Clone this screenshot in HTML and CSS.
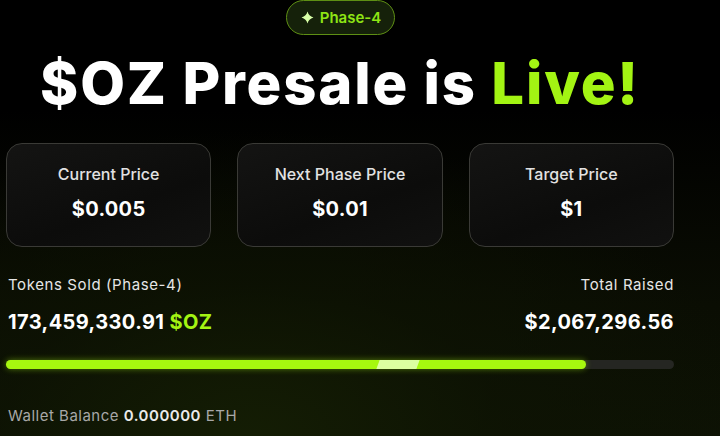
FILE: index.html
```html
<!DOCTYPE html>
<html>
<head>
<meta charset="utf-8">
<link rel="stylesheet" href="styles.css">
</head>
<body>
<main class="presale">
  <div class="badge-row">
    <span class="badge">
      <svg class="sparkle" viewBox="0 0 12 12" width="13" height="13"><path d="M6 0.5 C6.9 3.5 8.4 5 11.5 6 C8.4 7 6.9 8.5 6 11.5 C5.1 8.5 3.6 7 0.5 6 C3.6 5 5.1 3.5 6 0.5Z" fill="#d8ffa8"/></svg>
      Phase-4
    </span>
  </div>
  <h1 class="title">$OZ Presale is <span class="live">Live!</span></h1>
  <section class="cards">
    <div class="card"><div class="card-label">Current Price</div><div class="card-value">$0.005</div></div>
    <div class="card"><div class="card-label">Next Phase Price</div><div class="card-value">$0.01</div></div>
    <div class="card"><div class="card-label">Target Price</div><div class="card-value">$1</div></div>
  </section>
  <section class="stats">
    <div class="stat">
      <div class="stat-label">Tokens Sold (Phase-4)</div>
      <div class="stat-value">173,459,330.91 <span class="accent">$OZ</span></div>
    </div>
    <div class="stat stat-right">
      <div class="stat-label">Total Raised</div>
      <div class="stat-value">$2,067,296.56</div>
    </div>
  </section>
  <div class="track">
    <div class="fill" style="width:86.8%"><span class="shine"></span></div>
  </div>
  <p class="wallet">Wallet Balance <b>0.000000</b> ETH</p>
</main>
</body>
</html>
```
FILE: styles.css
```css
html, body {
  margin: 0;
  height: 100%;
}
body {
  background:
    radial-gradient(ellipse 70% 70% at 35% 100%, #141d04 0%, rgba(14,20,3,0.6) 50%, rgba(0,0,0,0) 100%),
    linear-gradient(180deg, #000 0%, #000 25%, #0a0d03 70%, #0d1204 100%);
  font-family: Inter, "Noto Sans", sans-serif;
  color: #fff;
  overflow: hidden;
}
.presale {
  width: 668px;
  margin-left: 6px;
  display: flex;
  flex-direction: column;
}
.badge-row {
  display: flex;
  justify-content: center;
}
.badge {
  display: inline-flex;
  align-items: center;
  gap: 6px;
  height: 35px;
  padding: 0 13px 0 14px;
  border: 1px solid #5e8f14;
  border-radius: 18px;
  background: #15210a;
  color: #8ee414;
  font: 600 15px Inter, sans-serif;
  box-sizing: border-box;
  margin-left: 1px;
}
.title {
  margin: 13px 0 0;
  text-align: center;
  font: 800 58px/70px Inter, sans-serif;
  letter-spacing: 1.8px;
  color: #fff;
}
.live { color: #a3f413; }
.cards {
  display: grid;
  grid-template-columns: repeat(3, 1fr);
  gap: 26px;
  margin-top: 25px;
}
.card {
  height: 104px;
  box-sizing: border-box;
  padding-bottom: 5px;
  border: 1px solid #3a3a36;
  border-radius: 16px;
  background: linear-gradient(160deg, #141413 0%, #0c0c0b 60%, #111110 100%);
  display: flex;
  flex-direction: column;
  align-items: center;
  justify-content: center;
  gap: 13px;
}
.card-label {
  font: 500 16px Inter, sans-serif;
  color: #e2e2e2;
}
.card-value {
  font: 700 20px Inter, sans-serif;
  letter-spacing: 0.3px;
  color: #fff;
}
.stats {
  display: flex;
  justify-content: space-between;
  margin-top: 28px;
  padding: 0 0 0 2px;
}
.stat { display: flex; flex-direction: column; gap: 16px; }
.stat-right { align-items: flex-end; }
.stat-label {
  font: 400 15px Inter, sans-serif;
  letter-spacing: 0.6px;
  color: #e6e6e6;
}
.stat-value {
  font: 700 20px Inter, sans-serif;
  letter-spacing: 0.4px;
  color: #fff;
}
.accent { color: #a3f413; }
.track {
  margin-top: 26px;
  height: 9px;
  border-radius: 5px;
  background: #252622;
  position: relative;
}
.fill {
  height: 100%;
  border-radius: 5px;
  background: #a6f80f;
  box-shadow: 0 0 6px rgba(166,248,15,0.45);
  position: relative;
  overflow: hidden;
}
.shine {
  position: absolute;
  left: 372px;
  width: 40px;
  top: 0;
  bottom: 0;
  background: #dcffa0;
  transform: skewX(-20deg);
}
.wallet {
  margin: 37px 0 0 2px;
  font: 400 15px Inter, sans-serif;
  letter-spacing: 0.5px;
  color: #a8a8a8;
}
.wallet b {
  font-weight: 600;
  color: #eaeaea;
}
```
